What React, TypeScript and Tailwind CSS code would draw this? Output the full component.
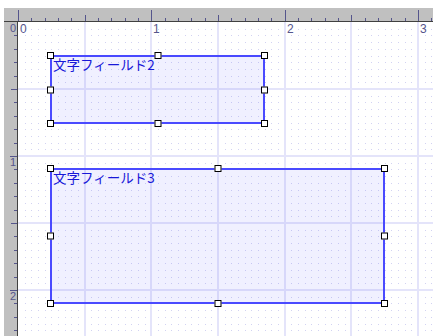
const SX = 133.333;
const SY = 134;
const CW = 415;
const CH = 314;

type Field = { label: string; x: number; y: number; w: number; h: number };

const fields: Field[] = [
  { label: '文字フィールド2', x: 0.25, y: 0.25, w: 1.6, h: 0.5 },
  { label: '文字フィールド3', x: 0.25, y: 1.1, w: 2.5, h: 1.0 },
];

// dot grid every 1/20 unit, skipping the half-unit lines
function dotPath() {
  let d = '';
  for (let i = 1; i * SX / 20 < CW; i++) {
    if (i % 10 === 0) continue;
    const x = Math.round(i * SX / 20);
    for (let j = 1; j * SY / 20 < CH; j++) {
      if (j % 10 === 0) continue;
      const y = Math.round(j * SY / 20);
      d += `M${x} ${y}h1v1h-1z`;
    }
  }
  return d;
}

const TopRuler = () => {
  const ticks = [];
  for (let i = 0; 14 + i * SX / 10 < 429; i++) {
    const x = Math.round(14 + i * SX / 10);
    const y = i % 10 === 0 ? 2 : i % 5 === 0 ? 7 : 10;
    ticks.push(<rect key={i} x={x} y={y} width={1} height={13 - y} fill="#55558c" />);
  }
  return (
    <svg className="absolute inset-0" width={429} height={13}>
      {ticks}
    </svg>
  );
};

const LeftRuler = () => {
  const ticks = [];
  for (let i = 1; i * SY / 10 < CH; i++) {
    const y = Math.round(i * SY / 10);
    const x = i % 10 === 0 ? 6 : i % 5 === 0 ? 7 : 10;
    ticks.push(<rect key={i} x={x} y={y} width={13 - x} height={1} fill="#55558c" />);
  }
  return (
    <svg className="absolute inset-0" width={13} height={CH}>
      {ticks}
    </svg>
  );
};

const Handle = ({ pos }: { pos: string }) => (
  <div className={`absolute w-[7px] h-[7px] border border-black bg-white ${pos}`} />
);

const FieldBox = ({ f }: { f: Field }) => (
  <div
    className="absolute border-2 border-[#4a4aff] bg-[rgba(64,64,255,0.08)]"
    style={{
      left: Math.round(f.x * SX) - 1,
      top: Math.round(f.y * SY) - 1,
      width: Math.round(f.w * SX) + 2,
      height: Math.round(f.h * SY) + 2,
    }}
  >
    <span className="block pl-px pt-px text-[13.5px] leading-none text-[#1818d8] font-['Noto_Sans_CJK_JP',sans-serif] whitespace-nowrap">
      {f.label}
    </span>
    <Handle pos="-left-[5px] -top-[5px]" />
    <Handle pos="left-1/2 -translate-x-1/2 -top-[5px]" />
    <Handle pos="-right-[5px] -top-[5px]" />
    <Handle pos="-left-[5px] top-1/2 -translate-y-1/2" />
    <Handle pos="-right-[5px] top-1/2 -translate-y-1/2" />
    <Handle pos="-left-[5px] -bottom-[5px]" />
    <Handle pos="left-1/2 -translate-x-1/2 -bottom-[5px]" />
    <Handle pos="-right-[5px] -bottom-[5px]" />
  </div>
);

const App = () => {
  const gridX = [0.5, 1, 1.5, 2, 2.5, 3];
  const gridY = [0.5, 1, 1.5, 2];

  return (
    <div className="w-[433px] h-[336px] bg-white pt-2 pl-1 flex flex-col overflow-hidden font-['Liberation_Sans',sans-serif]">
      <div className="relative h-[14px] shrink-0 bg-[#c0c0c0] border-b border-[#404040]">
        <TopRuler />
      </div>
      <div className="flex flex-1 min-h-0">
        <div className="relative w-[14px] shrink-0 bg-[#c0c0c0] border-r border-[#404040]">
          <LeftRuler />
          {['0', '1', '2'].map((n, i) => (
            <span
              key={n}
              className="absolute left-[6px] text-[11px] leading-none text-[#55558c]"
              style={{ top: Math.round(i * SY) + 1 }}
            >
              {n}
            </span>
          ))}
        </div>
        <div className="relative flex-1 overflow-hidden bg-white">
          <svg className="absolute inset-0" width={CW} height={CH}>
            <path d={dotPath()} fill="#d2d2f2" />
            {gridX.map((u) => (
              <rect key={'x' + u} x={Math.round(u * SX) - 1} y={0} width={2} height={CH} fill="#e4e4fa" />
            ))}
            {gridY.map((u) => (
              <rect key={'y' + u} x={0} y={Math.round(u * SY) - 1} width={CW} height={2} fill="#e4e4fa" />
            ))}
          </svg>
          {['0', '1', '2', '3'].map((n, i) => (
            <span
              key={n}
              className="absolute top-[1px] text-[12px] leading-none text-[#55558c]"
              style={{ left: Math.round(i * SX) + 2 }}
            >
              {n}
            </span>
          ))}
          {fields.map((f) => (
            <FieldBox key={f.label} f={f} />
          ))}
        </div>
      </div>
    </div>
  );
};

export default App;
